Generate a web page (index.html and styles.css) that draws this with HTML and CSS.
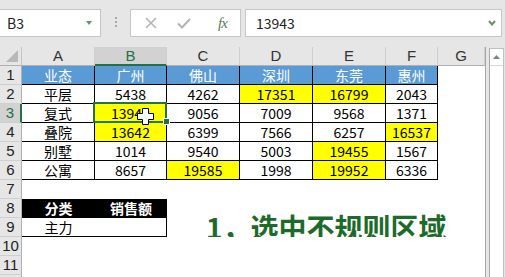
FILE: index.html
```html
<!DOCTYPE html>
<html>
<head>
<meta charset="utf-8">
<link rel="stylesheet" href="styles.css">
</head>
<body>
<div class="fbar">
  <div class="namebox"><span>B3</span><svg class="tri" width="6" height="4" viewBox="0 0 6 4"><polygon points="0,0 6,0 3,4" fill="#6f8c70"/></svg></div>
  <div class="dots"><i></i><i></i><i></i></div>
  <div class="btns">
    <svg class="ico-x" width="12" height="12" viewBox="0 0 12 12"><path d="M1 1L11 11M11 1L1 11" stroke="#b4b4b4" stroke-width="1.6" fill="none"/></svg>
    <svg class="ico-ok" width="14" height="11" viewBox="0 0 14 11"><path d="M1 5.5L5 9.5L13 1" stroke="#b4b4b4" stroke-width="2" fill="none"/></svg>
    <span class="fx">fx</span>
  </div>
  <div class="formula"><span>13943</span><svg class="chev" width="8" height="6" viewBox="0 0 8 6"><path d="M1 1L4 4.5L7 1" stroke="#6f8c70" stroke-width="2" fill="none"/></svg></div>
</div>
<div class="sheet">
  <div class="grid">
    <div class="corner"><svg width="12" height="12" viewBox="0 0 12 12"><polygon points="12,0 12,12 0,12" fill="#b8b8b8"/></svg></div>
    <div class="ch">A</div><div class="ch chsel">B</div><div class="ch">C</div><div class="ch">D</div><div class="ch">E</div><div class="ch">F</div><div class="ch">G</div>

    <div class="rh">1</div>
    <div class="c hd">业态</div><div class="c hd">广州</div><div class="c hd">佛山</div><div class="c hd">深圳</div><div class="c hd">东莞</div><div class="c hd">惠州</div><div class="e"></div>

    <div class="rh">2</div>
    <div class="c">平层</div><div class="c">5438</div><div class="c">4262</div><div class="c y">17351</div><div class="c y">16799</div><div class="c">2043</div><div class="e"></div>

    <div class="rh rhsel">3</div>
    <div class="c">复式</div><div class="c y sel">13943<span class="handle"></span><svg class="cursor" width="17" height="17" viewBox="0 0 17 17"><polygon points="5.5,0.5 11.5,0.5 11.5,5.5 16.5,5.5 16.5,11.5 11.5,11.5 11.5,16.5 5.5,16.5 5.5,11.5 0.5,11.5 0.5,5.5 5.5,5.5" fill="#fff" stroke="#000" stroke-width="1"/></svg></div><div class="c">9056</div><div class="c">7009</div><div class="c">9568</div><div class="c">1371</div><div class="e"></div>

    <div class="rh">4</div>
    <div class="c">叠院</div><div class="c y">13642</div><div class="c">6399</div><div class="c">7566</div><div class="c">6257</div><div class="c y">16537</div><div class="e"></div>

    <div class="rh">5</div>
    <div class="c">别墅</div><div class="c">1014</div><div class="c">9540</div><div class="c">5003</div><div class="c y">19455</div><div class="c">1567</div><div class="e"></div>

    <div class="rh">6</div>
    <div class="c">公寓</div><div class="c">8657</div><div class="c y">19585</div><div class="c">1998</div><div class="c y">19952</div><div class="c">6336</div><div class="e"></div>

    <div class="rh">7</div><div class="e span7"></div>

    <div class="rh">8</div>
    <div class="blk">分类</div><div class="blk">销售额</div><div class="e span5"></div>

    <div class="rh">9</div>
    <div class="a9">主力</div><div class="b9"></div><div class="note">1，选中不规则区域</div>

    <div class="rh">10</div><div class="e span7"></div>
    <div class="rh">11</div><div class="e span7"></div>
    <div class="rh"></div><div class="e span7"></div>
  </div>
  <div class="vscroll">
    <div class="track">
      <div class="up"><svg width="7" height="4" viewBox="0 0 7 4"><polygon points="0,4 7,4 3.5,0" fill="#6f8c70"/></svg></div>
    </div>
  </div>
</div>
</body>
</html>
```
FILE: styles.css
```css
html, body {
  margin: 0;
  padding: 0;
}
body {
  width: 505px;
  height: 277px;
  overflow: hidden;
  background: #e6e6e6;
  font-family: "Noto Sans CJK SC", "Liberation Sans", sans-serif;
  font-size: 14px;
  color: #000;
}
.fbar {
  display: flex;
  align-items: flex-start;
  height: 47px;
  padding-top: 9px;
  box-sizing: border-box;
}
.namebox, .btns, .formula {
  height: 28px;
  background: #fff;
  border: 1px solid #c6c6c6;
  box-sizing: border-box;
  display: flex;
  align-items: center;
}
.namebox {
  width: 102px;
  margin-left: -1px;
  justify-content: space-between;
  padding: 0 8px 0 7px;
  color: #222;
}
.dots {
  width: 29px;
  display: flex;
  flex-direction: column;
  align-items: center;
  gap: 2px;
  padding-top: 8px;
}
.dots i {
  display: block;
  width: 2px;
  height: 2px;
  background: #a8a8a8;
}
.btns {
  width: 111px;
  padding-left: 14px;
}
.ico-x { margin-right: 20px; }
.ico-ok { margin-right: 27px; }
.fx {
  font-family: "Liberation Serif", serif;
  font-style: italic;
  font-size: 15px;
  color: #5f765f;
  letter-spacing: -1px;
}
.formula {
  width: 257px;
  margin-left: 4px;
  justify-content: space-between;
  padding: 0 5px 0 10px;
  color: #222;
}
.sheet {
  display: flex;
}
.grid {
  display: grid;
  grid-template-columns: 22px 73px 72px 73px 73px 73px 52px 47px;
  grid-auto-rows: 19px;
  width: 485px;
  background: #fff;
}
.grid > div {
  box-sizing: border-box;
  line-height: 18px;
  text-align: center;
  white-space: nowrap;
}
.corner {
  background: #e6e6e6;
  border-right: 1px solid #c4c4c4;
  border-bottom: 1px solid #b0b0b0;
  display: flex;
  align-items: flex-end;
  justify-content: flex-end;
  padding: 0 3px 3px 0;
}
.corner svg { display: block; }
.ch {
  background: #e6e6e6;
  border-right: 1px solid #cfcfcf;
  border-bottom: 1px solid #b0b0b0;
  color: #333;
  font-family: "Liberation Sans", sans-serif;
  font-size: 15px;
}
.chsel {
  background: #d2d2d2;
  border-bottom: 2px solid #217346;
  color: #217346;
}
.rh {
  background: #e6e6e6;
  border-right: 1px solid #b0b0b0;
  border-bottom: 1px solid #cfcfcf;
  color: #222;
  font-family: "Liberation Sans", sans-serif;
  font-size: 15px;
}
.rhsel {
  background: #d2d2d2;
  border-right: 2px solid #217346;
  color: #217346;
}
.c {
  border-right: 1px solid #000;
  border-bottom: 1px solid #000;
}
.hd {
  background: #5b9bd5;
  color: #fff;
}
.y {
  background: #ffff00;
}
.sel {
  position: relative;
}
.sel::after {
  content: "";
  position: absolute;
  left: -2px;
  top: -2px;
  right: -1px;
  bottom: -1px;
  border: 2px solid #217346;
}
.handle {
  position: absolute;
  right: -4px;
  bottom: -3px;
  width: 5px;
  height: 5px;
  background: #217346;
  border: 1px solid #fff;
  z-index: 2;
}
.cursor {
  position: absolute;
  left: 42px;
  top: 4px;
  z-index: 3;
}
.e {
  background: #fff;
}
.span7 { grid-column: span 7; }
.span5 { grid-column: span 5; }
.blk {
  background: #000;
  color: #fff;
  font-weight: 700;
}
.a9 {
  border-bottom: 1px solid #000;
}
.b9 {
  border-bottom: 1px solid #000;
  border-right: 1px solid #000;
}
.note {
  grid-column: span 5;
  text-align: left !important;
  padding-left: 39px;
  font-size: 28px;
  font-weight: 700;
  line-height: 19px !important;
  color: #1d6b2a;
  overflow: visible;
}
.vscroll {
  width: 20px;
  height: 230px;
  box-sizing: border-box;
  border-left: 1px solid #a9a9a9;
  padding: 1px 1px 0 3px;
  background: #e6e6e6;
}
.track {
  height: 100%;
  background: #fff;
  border-left: 1px solid #a9a9a9;
  border-right: 1px solid #c0c0c0;
  border-top: 1px solid #c0c0c0;
  box-sizing: border-box;
}
.up {
  height: 16px;
  border-bottom: 1px solid #d6d6d6;
  display: flex;
  align-items: center;
  justify-content: center;
}
.up svg { display: block; }
```
